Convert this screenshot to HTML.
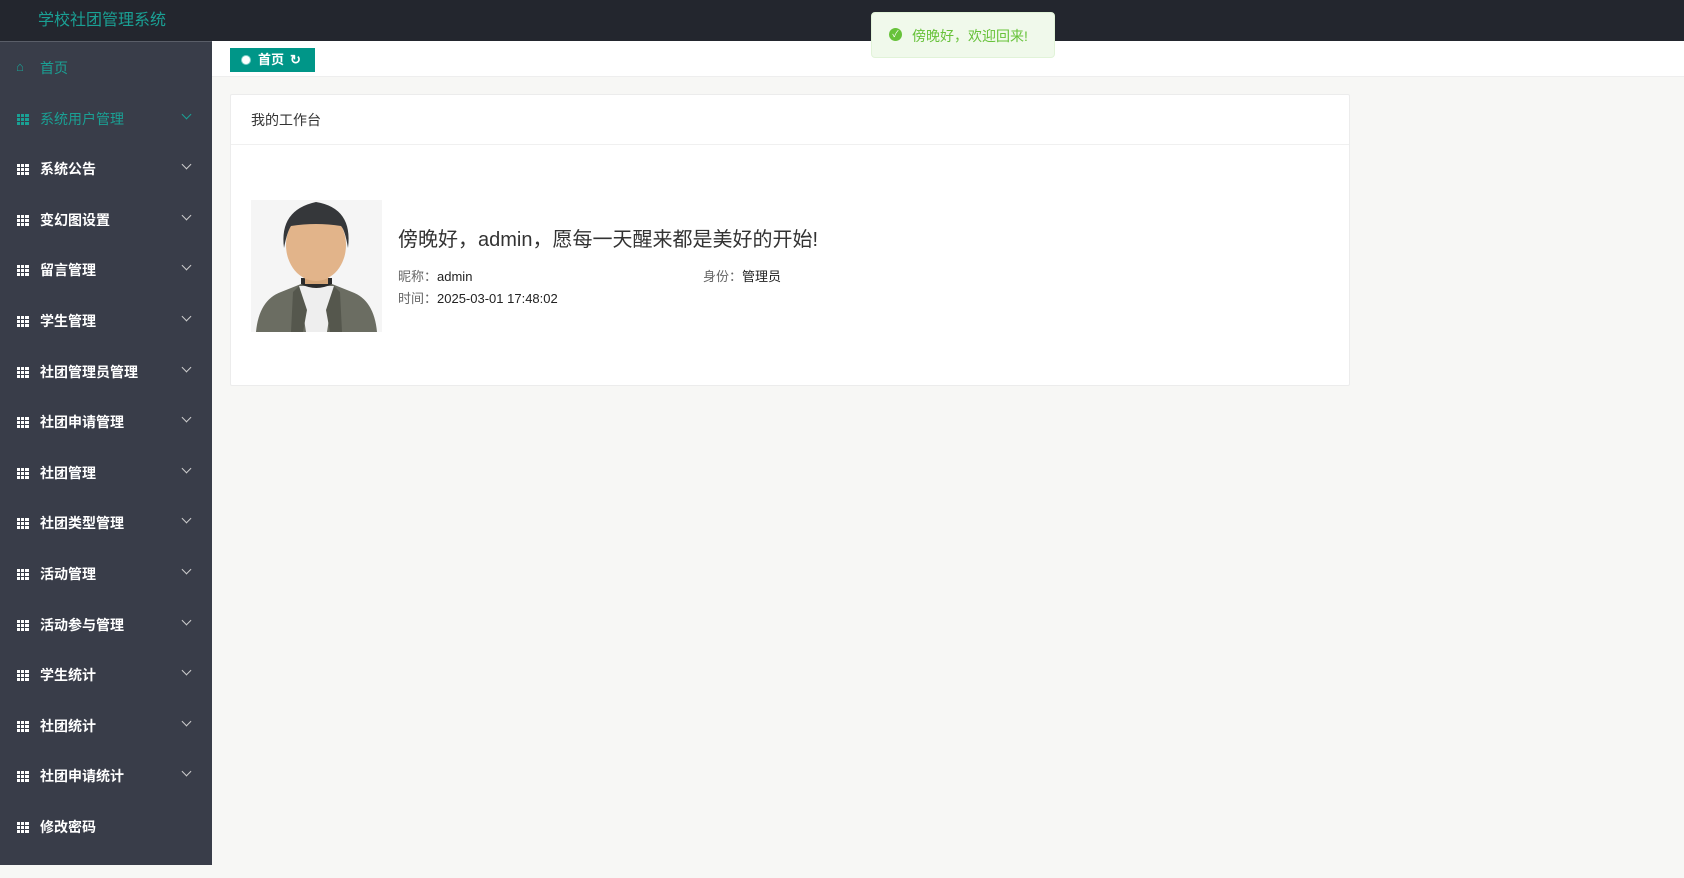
<!DOCTYPE html>
<html><head><meta charset="utf-8"><style>
*{margin:0;padding:0;box-sizing:border-box}
body{width:1684px;height:865px;overflow:hidden;background:#f7f7f5;font-family:"Liberation Sans","Noto Sans CJK SC",sans-serif;position:relative}
.hd{position:absolute;left:0;top:0;width:1684px;height:41px;background:#23262e}
.logo{position:absolute;left:38px;top:6px;color:#1aa094;font-size:16px}
.side{position:absolute;left:0;top:41px;width:212px;height:824px;background:#393d49;border-top:1px solid #5a5e68}
.it{position:absolute;left:0;width:212px;height:50px;color:#fff;font-size:14px;font-weight:bold}
.it .ic{position:absolute;left:17px;top:-6px;width:12px;height:11px;background:
linear-gradient(90deg,transparent 3px,#393d49 3px,#393d49 4px,transparent 4px,transparent 7px,#393d49 7px,#393d49 8px,transparent 8px),
linear-gradient(transparent 3px,#393d49 3px,#393d49 4px,transparent 4px,transparent 7px,#393d49 7px,#393d49 8px,transparent 8px),#fff}
.it .tx{position:absolute;left:40px;top:-11px}
.it .ar{position:absolute;left:183px;top:-9px;width:7px;height:7px;border-right:1.5px solid #ccc;border-bottom:1.5px solid #ccc;transform:rotate(45deg)}
.g{color:#1aa094;font-weight:normal}
.g .ic{background:linear-gradient(90deg,transparent 3px,#393d49 3px,#393d49 4px,transparent 4px,transparent 7px,#393d49 7px,#393d49 8px,transparent 8px),linear-gradient(transparent 3px,#393d49 3px,#393d49 4px,transparent 4px,transparent 7px,#393d49 7px,#393d49 8px,transparent 8px),#1aa094}
.g .ar{border-color:#1aa094}
.tabs{position:absolute;left:212px;top:41px;width:1472px;height:36px;background:#fff;border-bottom:1px solid #eee}
.tab{position:absolute;left:18px;top:7px;width:85px;height:24px;background:#009688;color:#fff;font-size:13px;font-weight:bold;line-height:24px;padding-left:28px}
.tab:before{content:"";position:absolute;left:12px;top:8px;width:8px;height:8px;border-radius:50%;background:#fff;box-shadow:0 0 0 1px #7fd0c8}
.tab:after{content:"↻";position:absolute;left:60px;top:0;font-size:13px}
.card{position:absolute;left:230px;top:94px;width:1120px;height:292px;background:#fff;border:1px solid #ececec;border-radius:2px}
.ch{height:50px;border-bottom:1px solid #f0f0f0;font-size:14px;color:#333;padding:15px 0 0 20px}
.av{position:absolute;left:20px;top:105px;width:131px;height:132px;background:#f5f5f5;overflow:hidden}
.gr{position:absolute;left:167px;top:128px;font-size:20px;color:#333}
.inf{position:absolute;font-size:13px;color:#666}
.inf b{color:#222;font-weight:normal}
.toast{position:absolute;left:871px;top:12px;width:184px;height:46px;background:#f0f9eb;border:1px solid #e1f3d8;border-radius:4px;color:#67c23a;font-size:14px;padding:13px 0 0 40px}
.toast:before{content:"✓";position:absolute;left:17px;top:15px;width:13px;height:13px;border-radius:50%;background:#67c23a;color:#fff;font-size:9px;line-height:13px;text-align:center}
</style></head><body>
<div class="hd"><div class="logo">学校社团管理系统</div></div>
<div class="side">
<div class="it g" style="top:27px"><span style="position:absolute;left:16px;top:-10px;font-size:13px">⌂</span><span class="tx">首页</span></div>
<div class="it g" style="top:78px"><span class="ic"></span><span class="tx">系统用户管理</span><span class="ar"></span></div>
<div class="it" style="top:128px"><span class="ic"></span><span class="tx">系统公告</span><span class="ar"></span></div>
<div class="it" style="top:179px"><span class="ic"></span><span class="tx">变幻图设置</span><span class="ar"></span></div>
<div class="it" style="top:229px"><span class="ic"></span><span class="tx">留言管理</span><span class="ar"></span></div>
<div class="it" style="top:280px"><span class="ic"></span><span class="tx">学生管理</span><span class="ar"></span></div>
<div class="it" style="top:331px"><span class="ic"></span><span class="tx">社团管理员管理</span><span class="ar"></span></div>
<div class="it" style="top:381px"><span class="ic"></span><span class="tx">社团申请管理</span><span class="ar"></span></div>
<div class="it" style="top:432px"><span class="ic"></span><span class="tx">社团管理</span><span class="ar"></span></div>
<div class="it" style="top:482px"><span class="ic"></span><span class="tx">社团类型管理</span><span class="ar"></span></div>
<div class="it" style="top:533px"><span class="ic"></span><span class="tx">活动管理</span><span class="ar"></span></div>
<div class="it" style="top:584px"><span class="ic"></span><span class="tx">活动参与管理</span><span class="ar"></span></div>
<div class="it" style="top:634px"><span class="ic"></span><span class="tx">学生统计</span><span class="ar"></span></div>
<div class="it" style="top:685px"><span class="ic"></span><span class="tx">社团统计</span><span class="ar"></span></div>
<div class="it" style="top:735px"><span class="ic"></span><span class="tx">社团申请统计</span><span class="ar"></span></div>
<div class="it" style="top:786px"><span class="ic"></span><span class="tx">修改密码</span></div>
</div>
<div class="tabs"><div class="tab">首页</div></div>
<div class="card">
<div class="ch">我的工作台</div>
<div class="av"><svg width="131" height="132" viewBox="0 0 131 132">
<path d="M5 132 Q8 100 30 92 L50 84 L81 84 L101 92 Q123 100 126 132Z" fill="#6b6d62"/>
<path d="M48 86 L83 86 L76 132 L55 132Z" fill="#eee"/>
<path d="M48 86 L56 110 L52 132 L40 132 L42 92Z M83 86 L75 110 L79 132 L91 132 L89 92Z" fill="#55574d"/>
<path d="M50 84 Q65 92 81 84 L81 78 L50 78Z" fill="#2b2b2b"/>
<rect x="54" y="60" width="23" height="24" fill="#d5a679"/>
<ellipse cx="65" cy="45" rx="30" ry="36" fill="#e2b48a"/>
<path d="M33 48 Q28 10 65 2 Q102 8 97 48 Q94 30 90 26 Q65 22 40 26 Q36 32 33 48Z" fill="#35373a"/>
</svg></div>
<div class="gr">傍晚好，admin，愿每一天醒来都是美好的开始!</div>
<div class="inf" style="left:167px;top:171px">昵称：<b>admin</b></div>
<div class="inf" style="left:472px;top:171px">身份：<b>管理员</b></div>
<div class="inf" style="left:167px;top:193px">时间：<b>2025-03-01 17:48:02</b></div>
</div>
<div class="toast">傍晚好，欢迎回来!</div>
</body></html>
